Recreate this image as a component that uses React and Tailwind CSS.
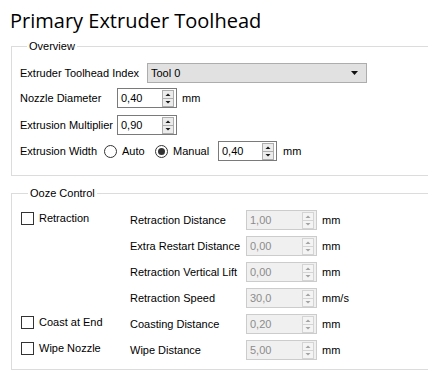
import React from 'react';

const ui = "font-[family-name:'Liberation_Sans',Arial,sans-serif] text-[11px]";

function SpinArrows({ disabled }) {
  const tri = disabled ? '#a3a3a3' : '#1a1a1a';
  const edge = disabled ? '#d4d4d4' : '#adadad';
  return (
    <svg width="12" height="17" viewBox="0 0 12 17" className="shrink-0">
      <rect x="0.5" y="0.5" width="11" height="16" fill={disabled ? '#f4f4f4' : '#ececec'} stroke={edge} />
      <line x1="1" y1="8.5" x2="11" y2="8.5" stroke={edge} />
      <polygon points="3.5,6 8.5,6 6,3.5" fill={tri} />
      <polygon points="3.5,11 8.5,11 6,13.5" fill={tri} />
    </svg>
  );
}

function Spin({ value, width, disabled }) {
  return (
    <div
      className={
        'flex h-[20px] items-center justify-between border pl-[3px] pr-[2px] ' +
        width + ' ' +
        (disabled ? 'border-[#cccccc] bg-[#f0f0f0] text-[#8c8c8c]' : 'border-[#7a7a7a] bg-white text-black')
      }
    >
      <span className="leading-none">{value}</span>
      <SpinArrows disabled={disabled} />
    </div>
  );
}

function Radio({ checked }) {
  return (
    <span className="flex h-[13px] w-[13px] items-center justify-center rounded-full border border-[#333333] bg-white">
      {checked && <span className="h-[7px] w-[7px] rounded-full bg-[#333333]"></span>}
    </span>
  );
}

function Check({ label }) {
  return (
    <div className="flex items-center gap-[5px]">
      <span className="h-[13px] w-[13px] border border-[#333333] bg-white"></span>
      <span>{label}</span>
    </div>
  );
}

const oozeRows = [
  { check: 'Retraction', label: 'Retraction Distance', value: '1,00', unit: 'mm' },
  { check: null, label: 'Extra Restart Distance', value: '0,00', unit: 'mm' },
  { check: null, label: 'Retraction Vertical Lift', value: '0,00', unit: 'mm' },
  { check: null, label: 'Retraction Speed', value: '30,0', unit: 'mm/s' },
  { check: 'Coast at End', label: 'Coasting Distance', value: '0,20', unit: 'mm' },
  { check: 'Wipe Nozzle', label: 'Wipe Distance', value: '5,00', unit: 'mm' },
];

export default function App() {
  return (
    <div className={'h-[387px] w-[428px] overflow-hidden bg-white text-black ' + ui}>
      <div className="h-[40px] pl-[10px] pt-[8px] font-[family-name:'Open_Sans',sans-serif] text-[20px] leading-[26px]">
        Primary Extruder Toolhead
      </div>

      <fieldset className="ml-[11px] w-[440px] border border-[#dcdcdc] pb-[14px] pl-[8px] pt-[10px]">
        <legend className="ml-[7px] px-[2px] leading-[13px]">Overview</legend>

        <div className="flex h-[20px] items-center">
          <span className="w-[127px]">Extruder Toolhead Index</span>
          <div className="flex h-[20px] w-[220px] items-center justify-between border border-[#adadad] bg-[#e1e1e1] pl-[3px] pr-[8px]">
            <span>Tool 0</span>
            <svg width="7" height="4" viewBox="0 0 7 4">
              <polygon points="0,0 7,0 3.5,4" fill="#111111" />
            </svg>
          </div>
        </div>

        <div className="mt-[5px] flex h-[20px] items-center">
          <span className="w-[97px]">Nozzle Diameter</span>
          <Spin value="0,40" width="w-[60px]" />
          <span className="ml-[5px]">mm</span>
        </div>

        <div className="mt-[7px] flex h-[20px] items-center">
          <span className="w-[97px]">Extrusion Multiplier</span>
          <Spin value="0,90" width="w-[60px]" />
        </div>

        <div className="mt-[6px] flex h-[20px] items-center">
          <span className="w-[84px]">Extrusion Width</span>
          <Radio />
          <span className="ml-[5px] w-[33px]">Auto</span>
          <Radio checked />
          <span className="ml-[5px] w-[45px]">Manual</span>
          <Spin value="0,40" width="w-[59px]" />
          <span className="ml-[6px]">mm</span>
        </div>
      </fieldset>

      <fieldset className="ml-[11px] mt-[11px] w-[440px] border border-[#dcdcdc] pb-[6px] pl-[9px] pt-[7px]">
        <legend className="ml-[7px] px-[2px] leading-[13px]">Ooze Control</legend>
        <div className="grid grid-cols-[109px_116px_76px_auto] auto-rows-[26px] items-center">
          {oozeRows.map(function (r) {
            return (
              <React.Fragment key={r.label}>
                <div className="-mt-[3px]">{r.check ? <Check label={r.check} /> : null}</div>
                <div>{r.label}</div>
                <Spin value={r.value} width="w-[71px]" disabled />
                <div>{r.unit}</div>
              </React.Fragment>
            );
          })}
        </div>
      </fieldset>
    </div>
  );
}
